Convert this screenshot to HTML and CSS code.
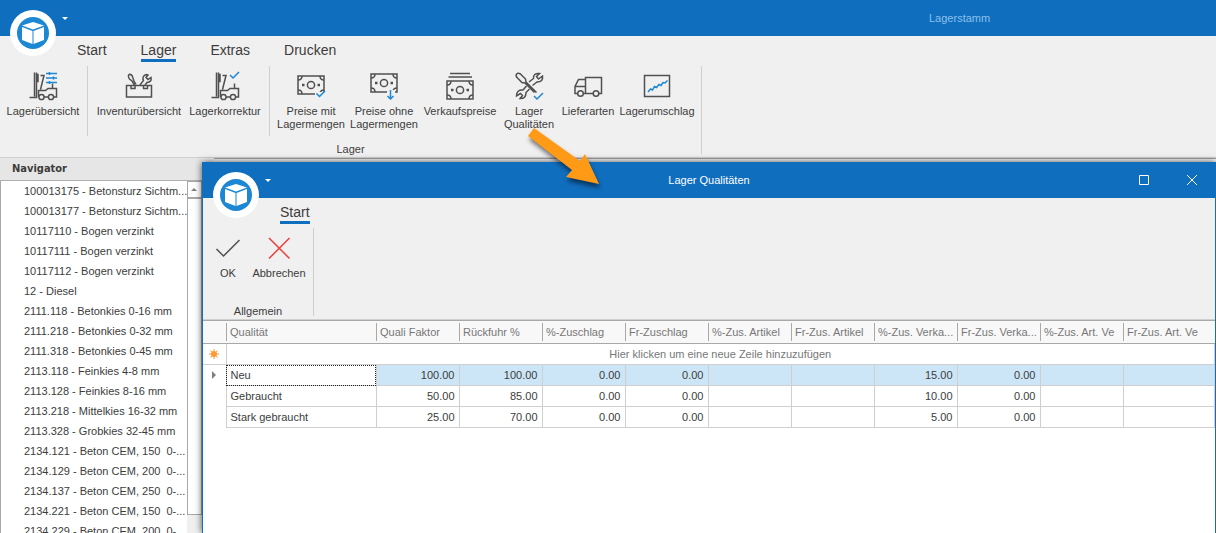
FILE: index.html
```
<!DOCTYPE html>
<html lang="de">
<head>
    <meta charset="UTF-8">
    <meta name="viewport" content="width=device-width, initial-scale=1.0">
    <title>Lagerstamm</title>
    <link rel="stylesheet" href="styles.css">
</head>
<body>

    <!-- shared icon shapes -->
    <svg class="defs" aria-hidden="true">
        <symbol id="logo" viewBox="0 0 46 46">
            <circle cx="23" cy="23" r="23" fill="#fff"/>
            <circle cx="23" cy="23" r="16" fill="#1c87d3"/>
            <path fill="#fff" d="M23 12L34 15.500L23 19.500L12 15.500Z M12 17L22.500 21V34L12 30Z M34 17L23.500 21V34L34 30Z"/>
        </symbol>
        <symbol id="forklift" viewBox="0 0 32 32">
            <path d="M7.500 2.500V26.500M9.500 2.500V27.500H2.500M9.500 4.500H11V11.500H9.500"/>
            <path d="M13.500 5.500H17L13.500 19.500M11.500 27V20.500H18.500L21 18.500H29.500V27H27M17 27H21.500M25.500 13.500V18.500"/>
            <circle cx="14.500" cy="27" r="2.600"/>
            <circle cx="24" cy="27" r="2.600"/>
        </symbol>
        <symbol id="bill" viewBox="0 0 28 20">
            <rect x="1" y="1" width="26" height="18"/>
            <circle cx="14" cy="10" r="3.600"/>
            <path d="M1 5Q5 5 5 1M23 1Q23 5 27 5M1 15Q5 15 5 19M23 19Q23 15 27 15"/>
            <path d="M5 10H7.500M20.500 10H23" stroke-width="2.400"/>
        </symbol>
    </svg>

    <div class="window">
        <header class="titlebar">
            <svg class="logo"><use href="#logo"/></svg>
            <span class="caret"></span>
            <span class="title main-title">Lagerstamm</span>
        </header>

        <nav class="tabs">
            <button class="tab">Start</button>
            <button class="tab active">Lager</button>
            <button class="tab">Extras</button>
            <button class="tab">Drucken</button>
        </nav>

        <div class="ribbon">
            <section class="group">
                <div class="tools">
                    <button class="tool wide">
                        <svg class="icon" viewBox="0 0 32 32">
                            <use href="#forklift"/>
                            <path class="blue" d="M19 3.500H30M19 8H30M19 12.500H30M22.500 2V5M26.500 6.500V9.500M22.500 11V14"/>
                        </svg>
                        Lagerübersicht
                    </button>
                    <span class="divider"></span>
                    <button class="tool widest">
                        <svg class="icon" viewBox="0 0 32 32">
                            <path d="M3.500 15.500H28.500V27H3.500ZM8 15.500V18.500H12V15.500M20.500 15.500V18.500H24.500V15.500"/>
                            <path d="M5.500 5Q7 3.500 9 5.500L11 11L13 14.500M5.500 5Q5 7 6.500 9L9 11L11.500 15"/>
                            <path d="M17 15L20.500 10.500Q18.500 6 23.500 4.500L25 5L23 7.500L25 9.500L28 7.500Q29 12 24 12.500L22 15"/>
                        </svg>
                        Inventurübersicht
                    </button>
                    <button class="tool wide">
                        <svg class="icon" viewBox="0 0 32 32">
                            <use href="#forklift"/>
                            <path class="blue" d="M21 5L24 8L30 2"/>
                        </svg>
                        Lagerkorrektur
                    </button>
                    <span class="divider"></span>
                    <button class="tool">
                        <svg class="icon" viewBox="0 0 32 32">
                            <use href="#bill" x="2" y="5" width="28" height="20"/>
                            <path class="cover" d="M20 24H32"/>
                            <path class="blue" d="M21.500 23.500L24.500 26.500L30 21"/>
                        </svg>
                        Preise mit<br>Lagermengen
                    </button>
                    <button class="tool">
                        <svg class="icon" viewBox="0 0 32 32">
                            <use href="#bill" x="2" y="3" width="28" height="20"/>
                            <path class="cover" d="M19 22H27"/>
                            <path class="blue" d="M22.500 20V29M19.500 26L22.500 29L25.500 26"/>
                        </svg>
                        Preise ohne<br>Lagermengen
                    </button>
                    <button class="tool wide">
                        <svg class="icon" viewBox="0 0 32 32">
                            <path d="M6 3.500H26M4.500 7H28"/>
                            <use href="#bill" x="2" y="10" width="28" height="20"/>
                        </svg>
                        Verkaufspreise
                    </button>
                    <button class="tool narrow">
                        <svg class="icon" viewBox="0 0 32 32">
                            <path d="M3.500 4Q5 2.500 7.500 4L12.500 9L13 12L23.500 22.500M3.500 4Q2.500 6.500 4.500 8L9 12.500L12 13L21.500 22.500"/>
                            <path d="M16 12L20.500 8.500Q20 3 26.500 3.500L23.500 6.500L25.500 9L29.500 6Q30.500 12 24 12L19.500 15.500M13.500 16L10 20Q3.500 19.500 3.500 26L7.500 23.500L9.500 25.500L7 28.500Q13 29 13 22.500L16.500 19"/>
                            <path class="blue" d="M21 26L24 29L30 23"/>
                        </svg>
                        Lager<br>Qualitäten
                    </button>
                    <button class="tool narrow">
                        <svg class="icon" viewBox="0 0 32 32">
                            <path d="M5.500 23.500H3V16.500L6.500 9.500H13.500V23.500M13.500 9.500V7.500H29.500V23.500H27M11.500 23.500H21M3 16.500H13.500"/>
                            <circle cx="8.500" cy="23.500" r="2.800"/>
                            <circle cx="24" cy="23.500" r="2.800"/>
                        </svg>
                        Lieferarten
                    </button>
                    <button class="tool wide">
                        <svg class="icon" viewBox="0 0 32 32">
                            <rect x="3.500" y="5.500" width="25" height="21"/>
                            <path class="blue" d="M7 22L9.500 19L11.500 20L13.500 16.500L15.500 17.500L18 14.500L20 15.500L22 12.500L24 13L26.500 10.500"/>
                        </svg>
                        Lagerumschlag
                    </button>
                </div>
                <div class="caption">Lager</div>
            </section>
        </div>

        <div class="content">
            <aside class="navigator">
                <h2>Navigator</h2>
                <div class="list">
                    <ul>
                        <li>100013175 - Betonsturz Sichtm...</li>
                        <li>100013177 - Betonsturz Sichtm...</li>
                        <li>10117110 - Bogen verzinkt</li>
                        <li>10117111 - Bogen verzinkt</li>
                        <li>10117112 - Bogen verzinkt</li>
                        <li>12 - Diesel</li>
                        <li>2111.118 - Betonkies 0-16 mm</li>
                        <li>2111.218 - Betonkies 0-32 mm</li>
                        <li>2111.318 - Betonkies 0-45 mm</li>
                        <li>2113.118 - Feinkies 4-8 mm</li>
                        <li>2113.128 - Feinkies 8-16 mm</li>
                        <li>2113.218 - Mittelkies 16-32 mm</li>
                        <li>2113.328 - Grobkies 32-45 mm</li>
                        <li>2134.121 - Beton CEM, 150  0-...</li>
                        <li>2134.129 - Beton CEM, 200  0-...</li>
                        <li>2134.137 - Beton CEM, 250  0-...</li>
                        <li>2134.221 - Beton CEM, 150  0-...</li>
                        <li>2134.229 - Beton CEM, 200  0-...</li>
                    </ul>
                    <div class="scrollbar">
                        <span class="scroll-up"></span>
                        <span class="thumb"></span>
                    </div>
                </div>
            </aside>
            <div class="main-grid"></div>
        </div>
    </div>

    <div class="dialog" role="dialog" aria-label="Lager Qualitäten">
        <header class="titlebar">
            <svg class="logo"><use href="#logo"/></svg>
            <span class="caret"></span>
            <span class="title">Lager Qualitäten</span>
            <div class="controls">
                <button aria-label="Maximieren"><svg viewBox="0 0 12 12"><path d="M1.500 1.500H10.500V10.500H1.500Z"/></svg></button>
                <button aria-label="Schliessen"><svg viewBox="0 0 12 12"><path d="M1 1L11 11M11 1L1 11"/></svg></button>
            </div>
        </header>

        <nav class="tabs">
            <button class="tab active">Start</button>
        </nav>

        <div class="ribbon">
            <section class="group">
                <div class="tools">
                    <button class="tool small">
                        <svg class="icon" viewBox="0 0 32 32"><path d="M4.500 17L11.500 24L27.500 8"/></svg>
                        OK
                    </button>
                    <button class="tool narrow">
                        <svg class="icon" viewBox="0 0 32 32"><path class="red" d="M6 6L26.500 26.500M26.500 6L6 26.500"/></svg>
                        Abbrechen
                    </button>
                </div>
                <div class="caption">Allgemein</div>
            </section>
        </div>

        <table class="grid">
            <colgroup>
                <col class="c-mark"><col class="c-name">
                <col class="c-num"><col class="c-num"><col class="c-num">
                <col class="c-num"><col class="c-num"><col class="c-num">
                <col class="c-num"><col class="c-num"><col class="c-num">
                <col>
            </colgroup>
            <thead>
                <tr>
                    <th></th>
                    <th>Qualität</th>
                    <th>Quali Faktor</th>
                    <th>Rückfuhr %</th>
                    <th>%-Zuschlag</th>
                    <th>Fr-Zuschlag</th>
                    <th>%-Zus. Artikel</th>
                    <th>Fr-Zus. Artikel</th>
                    <th>%-Zus. Verka...</th>
                    <th>Fr-Zus. Verka...</th>
                    <th>%-Zus. Art. Ve</th>
                    <th>Fr-Zus. Art. Ve</th>
                </tr>
            </thead>
            <tbody>
                <tr class="new-row">
                    <td class="mark">
                        <svg class="star" viewBox="0 0 10 10"><circle cx="5" cy="5" r="2.600"/><path d="M5 0V10M0 5H10M1.500 1.500L8.500 8.500M8.500 1.500L1.500 8.500"/></svg>
                    </td>
                    <td colspan="11">Hier klicken um eine neue Zeile hinzuzufügen</td>
                </tr>
                <tr class="selected">
                    <td class="mark"><span class="pointer"></span></td>
                    <td class="focus">Neu</td>
                    <td>100.00</td><td>100.00</td><td>0.00</td><td>0.00</td>
                    <td></td><td></td><td>15.00</td><td>0.00</td><td></td><td></td>
                </tr>
                <tr>
                    <td class="mark"></td>
                    <td>Gebraucht</td>
                    <td>50.00</td><td>85.00</td><td>0.00</td><td>0.00</td>
                    <td></td><td></td><td>10.00</td><td>0.00</td><td></td><td></td>
                </tr>
                <tr>
                    <td class="mark"></td>
                    <td>Stark gebraucht</td>
                    <td>25.00</td><td>70.00</td><td>0.00</td><td>0.00</td>
                    <td></td><td></td><td>5.00</td><td>0.00</td><td></td><td></td>
                </tr>
            </tbody>
        </table>
    </div>

    <!-- pointer from the tool button to the dialog it opens -->
    <svg class="arrow" viewBox="0 0 80 64">
        <path d="M14 4L60 37L65 30L79 60L46 53L52 46L8 12Z"/>
    </svg>

</body>
</html>
```
FILE: styles.css
```
* {
    box-sizing: border-box;
}
body {
    margin: 0;
    height: 100vh;
    overflow: hidden;
    position: relative;
    background-color: #f0f0f0;
    color: #3c3c3c;
    font-family: "Liberation Sans", Arial, sans-serif;
    font-size: 11px;
    line-height: 13px;
}
button {
    padding: 0;
    border: none;
    background: none;
    color: inherit;
    font: inherit;
    cursor: pointer;
}
.defs {
    position: absolute;
    width: 0;
    height: 0;
}

/* windows */
.window {
    height: 100%;
    display: flex;
    flex-direction: column;
}
.dialog {
    position: absolute;
    left: 202px;
    top: 162px;
    right: 0;
    bottom: 0;
    border: 0 solid #106ebe;
    border-width: 0 1px;
    background-color: #fff;
    box-shadow: 0 0 7px rgba(0, 0, 0, 0.7);
}
.titlebar {
    position: relative;
    display: flex;
    align-items: center;
    height: 36px;
    background-color: #106ebe;
    color: #fff;
}
.logo {
    position: absolute;
    left: 10px;
    top: 10px;
    width: 46px;
    height: 46px;
}
.caret {
    position: absolute;
    left: 62px;
    top: 17px;
    border: 3px solid transparent;
    border-top-color: #fff;
    border-bottom: none;
}
.title {
    flex: 1;
    text-align: center;
}
.main-title {
    padding-left: 929px;
    text-align: left;
    color: #8cc0ec;
}
.controls {
    position: absolute;
    right: -1px;
    display: flex;
}
.controls button {
    width: 48px;
    height: 36px;
}
.controls svg {
    width: 12px;
    height: 12px;
    display: block;
    margin: 0 auto;
    fill: none;
    stroke: #fff;
}

/* ribbon */
.tabs {
    display: flex;
    gap: 34px;
    height: 30px;
    padding: 5px 77px 0;
    background-color: #f0f0f0;
}
.tab {
    height: 21px;
    font-size: 14px;
    line-height: 18px;
    padding-bottom: 3px;
}
.tab.active {
    padding-bottom: 0;
    border-bottom: 3px solid #106ebe;
}
.ribbon {
    display: flex;
    height: 92px;
    background-color: #f0f0f0;
    border-bottom: 1px solid #d0d0d0;
}
.group {
    height: 88px;
    border-right: 1px solid #cfcfcf;
}
.tools {
    display: flex;
    gap: 7px;
    height: 70px;
    padding: 0 8px 0 7px;
}
.tool {
    width: 66px;
    padding-top: 4px;
    display: flex;
    flex-direction: column;
    align-items: center;
    white-space: nowrap;
}
.tool.small {
    width: 36px;
}
.tool.narrow {
    width: 52px;
}
.tool.wide {
    width: 72px;
}
.tool.widest {
    width: 86px;
}
.divider {
    width: 1px;
    margin: 0 1px;
    background-color: #cfcfcf;
}
.icon {
    width: 32px;
    height: 32px;
    margin-bottom: 3px;
    fill: none;
    stroke: #505050;
    stroke-width: 1.5;
}
.blue {
    stroke: #1c87d3;
}
.red {
    stroke: #ee3e3e;
}
.cover {
    stroke: #f0f0f0;
    stroke-width: 4;
}
.caption {
    margin-top: 7px;
    text-align: center;
}

/* navigator */
.content {
    flex: 1;
    min-height: 0;
    display: flex;
}
.navigator {
    width: 202px;
    display: flex;
    flex-direction: column;
}
.navigator h2 {
    margin: 0;
    height: 23px;
    padding-left: 12px;
    background-color: #e6e6e6;
    border-bottom: 1px solid #b0b0b0;
    font-family: "DejaVu Sans Condensed", "DejaVu Sans", sans-serif;
    font-size: 11px;
    line-height: 22px;
}
.list {
    flex: 1;
    min-height: 0;
    display: flex;
    overflow: hidden;
    background-color: #fff;
    border-left: 1px solid #a8a8a8;
}
.list ul {
    flex: 1;
    min-width: 0;
    margin: 0;
    padding: 0 0 0 23px;
    list-style: none;
}
.list li {
    height: 20px;
    line-height: 20px;
    white-space: pre;
}
.scrollbar {
    width: 15px;
    background-color: #f0f0f0;
}
.scroll-up,
.thumb {
    display: block;
    background-color: #fff;
    border: 1px solid #a8a8a8;
}
.scroll-up {
    height: 17px;
    padding: 6px 3px;
}
.scroll-up::before {
    content: "";
    display: block;
    width: 0;
    border: 3px solid transparent;
    border-top: none;
    border-bottom-color: #808080;
}
.thumb {
    height: 90%;
}
.main-grid {
    flex: 1;
    margin-left: 12px;
    border-top: 1px solid #a0a0a0;
    background-color: #f8f8f8;
}

/* data grid */
.grid {
    width: 100%;
    table-layout: fixed;
    border-collapse: collapse;
    border-top: 1px solid #a8a8a8;
}
.c-mark {
    width: 23px;
}
.c-name {
    width: 150px;
}
.c-num {
    width: 83px;
}
.grid th,
.grid td {
    height: 21px;
    padding: 0 4px;
    border: 1px solid #cfcfcf;
    overflow: hidden;
    white-space: nowrap;
    text-align: right;
}
.grid th {
    position: relative;
    height: 23px;
    border: none;
    border-bottom: 1px solid #a8a8a8;
    background-color: #f8f8f8;
    color: #777;
    font-weight: normal;
    text-align: left;
}
.grid th + th::before {
    content: "";
    position: absolute;
    left: 0;
    top: 2px;
    bottom: 2px;
    border-left: 1px solid #a8a8a8;
}
.grid td:nth-child(2) {
    text-align: left;
}
.grid .new-row td:nth-child(2) {
    color: #777;
    text-align: center;
}
.grid td.mark {
    padding: 0;
    border-left: none;
    border-top: none;
    border-bottom: none;
    text-align: center;
}
.grid .new-row .mark {
    border-bottom: 1px solid #cfcfcf;
}
.grid .selected td {
    background-color: #cde6f7;
}
.grid .selected .mark,
.grid .selected .focus {
    background-color: #fff;
}
.grid .selected .focus {
    outline: 1px dotted #222;
    outline-offset: -1px;
}
.star {
    width: 10px;
    height: 10px;
    display: block;
    margin: 0 auto;
    fill: #ff8c1a;
    stroke: #ff9d3c;
}
.pointer {
    display: inline-block;
    border: 4px solid transparent;
    border-left-color: #808080;
    border-right: none;
}

.arrow {
    position: absolute;
    left: 520px;
    top: 124px;
    width: 80px;
    height: 64px;
    overflow: visible;
    fill: #ff9a16;
    filter: drop-shadow(1px 4px 2px rgba(0, 0, 0, 0.5));
}
```
